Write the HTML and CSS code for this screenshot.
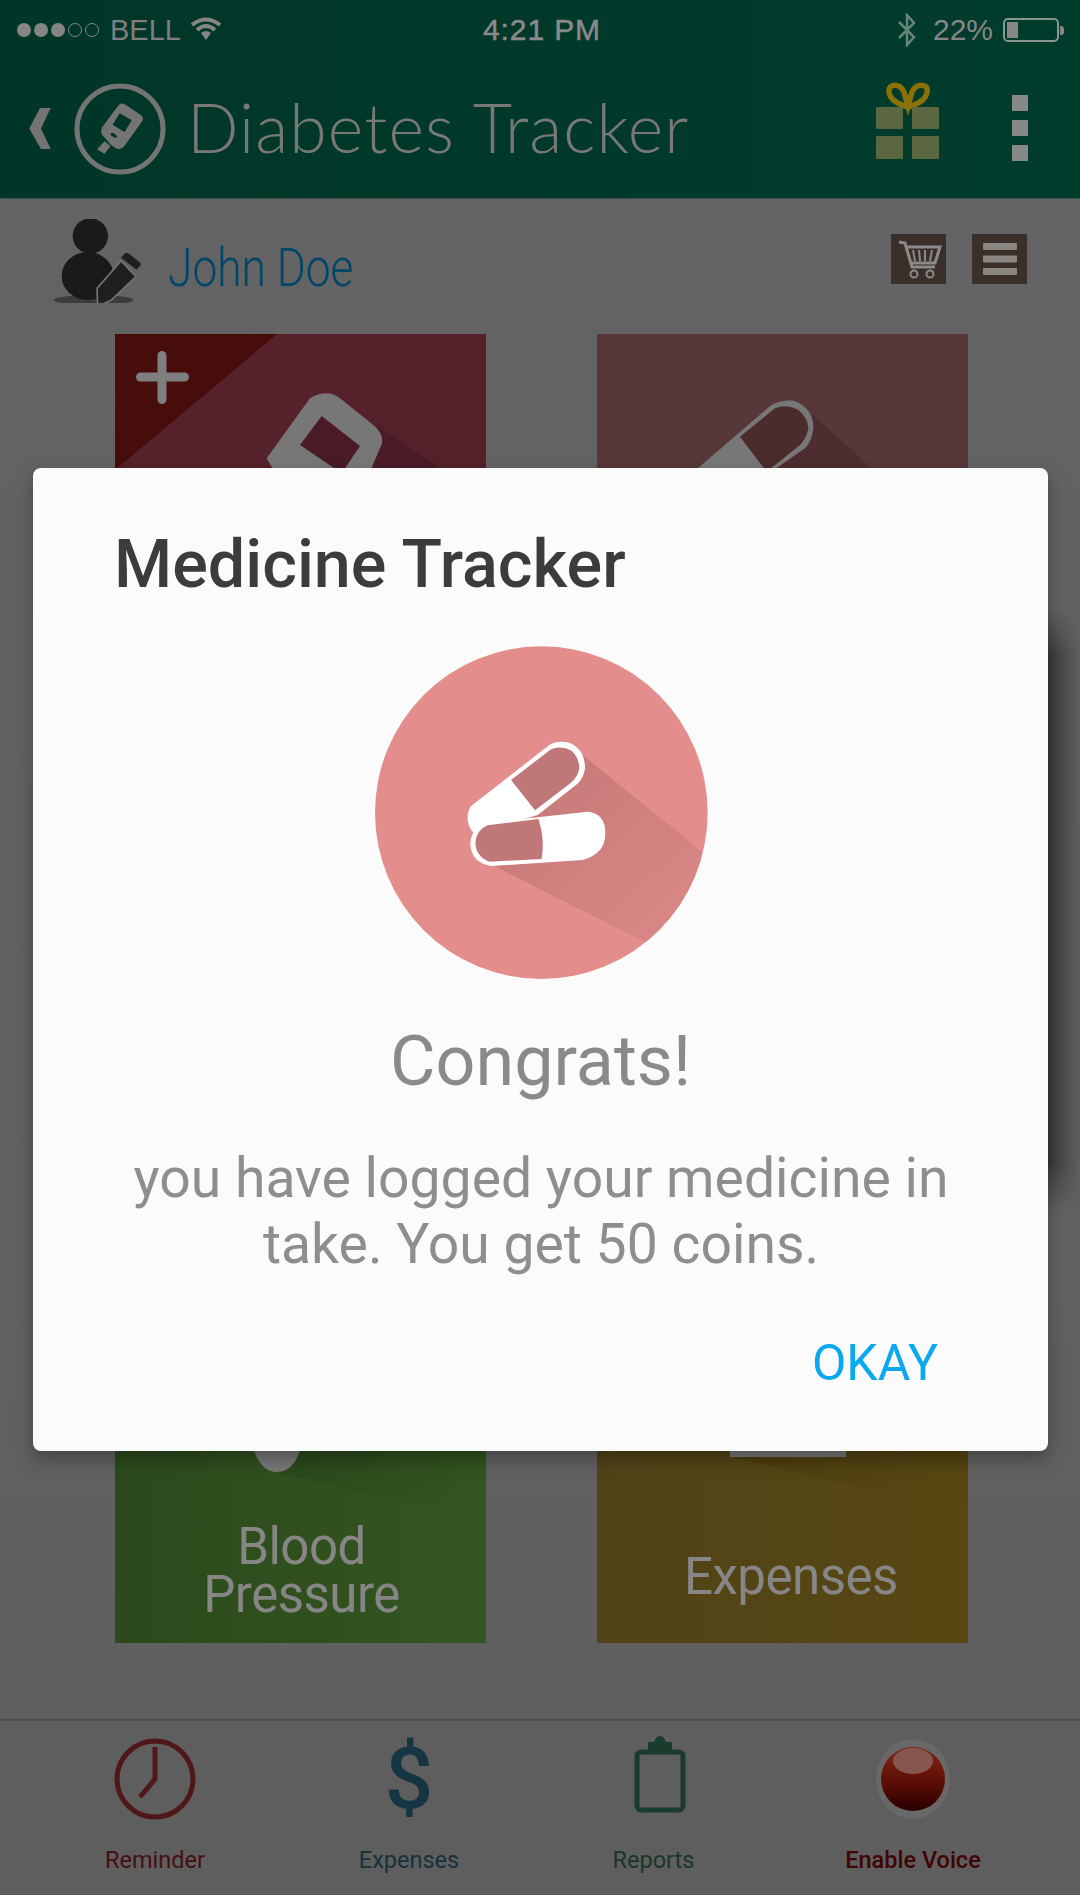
FILE: index.html
```html
<!DOCTYPE html>
<html lang="en">
<head>
<meta charset="utf-8">
<title>Diabetes Tracker</title>
<link rel="stylesheet" href="styles.css">
</head>
<body>
<div class="app">
  <header class="topbar">
    <div class="status">
      <div class="status-left">
        <span class="dots"><i class="dot"></i><i class="dot"></i><i class="dot"></i><i class="dot hollow"></i><i class="dot hollow"></i></span>
        <span class="carrier">BELL</span>
        <svg class="wifi" viewBox="0 0 30 24"><path d="M1 8 Q15 -3 29 8" class="wifi-arc"/><path d="M6 13 Q15 5 24 13" class="wifi-arc"/><path d="M10 16 Q15 12 20 16 L15 23 Z" class="wifi-fill"/></svg>
      </div>
      <span class="clock">4:21 PM</span>
      <div class="status-right">
        <svg class="bt" viewBox="0 0 18 34"><path d="M1 9 L16 24 L9 32 V2 L16 10 L1 25" class="bt-line"/></svg>
        <span class="pct">22%</span>
        <span class="battery"><i class="battery-level"></i></span>
        <i class="battery-nub"></i>
      </div>
    </div>
    <div class="nav">
      <svg class="back" viewBox="0 0 22 44"><path d="M11 1 H22 L12 22 L22 43 H12 L0 22 Z"/></svg>
      <svg class="logo" viewBox="0 0 94 94">
        <circle cx="47" cy="47" r="43" class="logo-ring"/>
        <g transform="translate(-72.500 -80) scale(.33333)">
          <path class="logo-fill" d="M352 312 Q362 300 375 308 L420 338 Q432 346 425 358 L372 432 Q362 446 345 438 L328 426 L322 418 L303 396 Q300 385 305 376 Z"/>
          <path class="logo-hole" d="M358 334 L394 355 L372 390 L336 368 Z"/>
          <ellipse class="logo-hole" cx="340" cy="400" rx="11" ry="5" transform="rotate(32 340 400)"/>
          <path class="logo-fill" d="M312 418 L330 432 L312 456 L290 442 Z"/>
        </g>
      </svg>
      <h1 class="app-title">Diabetes Tracker</h1>
      <svg class="gift" viewBox="0 0 64 76">
        <path class="bow" d="M31 23 C24 20 14 17 13 8 C12 -1 24 -1 28 8 L32 22 L36 8 C40 -1 53 -1 51 8 C50 17 40 20 33 23"/>
        <rect class="gift-box" x="0" y="23" width="27" height="22" rx="1"/>
        <rect class="gift-box" x="36" y="23" width="27" height="22" rx="1"/>
        <rect class="gift-box" x="0" y="52" width="27" height="23" rx="1"/>
        <rect class="gift-box" x="36" y="52" width="27" height="23" rx="1"/>
      </svg>
      <div class="kebab"><i></i><i></i><i></i></div>
    </div>
  </header>

  <main class="content">
    <div class="user-row">
      <svg class="avatar" viewBox="0 0 100 84">
        <g transform="translate(-11 -8) scale(.33333)">
          <ellipse class="av-shadow" cx="158" cy="267" rx="120" ry="15"/>
          <circle class="av-body" cx="148" cy="75" r="53"/>
          <ellipse class="av-body" cx="140" cy="195" rx="78" ry="72"/>
          <path class="av-pen" d="M168 232 L240 150 L285 197 L210 268 L170 286 Z"/>
          <path class="av-cap" d="M252 127 Q258 124 264 128 L296 154 Q302 160 296 166 L286 176 L240 140 Z"/>
        </g>
      </svg>
      <span class="user-name">John Doe</span>
      <div class="tools">
        <span class="tool">
          <svg viewBox="0 0 55 50"><path class="cart" d="M8 8 L14 9 L21 33 H44 M15 13 H49 L44 29 H20"/><path class="cart thin" d="M22 16 L24 27 M28 16 L29 27 M34 16 L34 27 M41 16 L39 27"/><circle class="cart thin" cx="23" cy="40" r="3.500"/><circle class="cart thin" cx="39" cy="40" r="3.500"/></svg>
        </span>
        <span class="tool">
          <svg viewBox="0 0 55 50"><rect class="menu-bar" x="11" y="9" width="34" height="7" rx="1"/><rect class="menu-bar" x="11" y="21.500" width="34" height="7" rx="1"/><rect class="menu-bar" x="11" y="34" width="34" height="7" rx="1"/></svg>
        </span>
      </div>
    </div>

    <div class="cards">
      <div class="card card-log">
        <svg class="art" viewBox="115 334 371 371">
          <polygon class="corner" points="115,334 277,334 115,470"/>
          <rect class="plus" x="136" y="372.500" width="53" height="9" rx="4.500"/>
          <rect class="plus" x="157.500" y="351" width="9" height="53" rx="4.500"/>
          <g transform="translate(110 330) scale(.33333)">
            <path class="log-shadow" d="M800 285 L1010 430 L780 430 Z"/>
            <path class="art-white" d="M600 205 Q650 175 690 205 L790 285 Q830 320 810 355 L760 470 L520 470 L470 385 Z"/>
            <path class="log-hole" d="M635 258 L750 348 L695 430 L570 345 Z"/>
          </g>
        </svg>
      </div>
      <div class="card card-med">
        <svg class="art" viewBox="597 334 371 371">
          <g transform="translate(590 330) scale(.33333)">
            <path class="med-shadow" d="M670 255 L860 430 L520 430 Z"/>
            <path class="art-white" d="M300 435 L540 228 Q570 208 610 212 Q668 232 670 290 Q668 330 645 355 L530 435 Z"/>
            <path class="med-fill" d="M450 320 L555 235 Q590 220 625 240 Q655 265 655 295 Q650 325 630 345 L530 425 Z"/>
          </g>
        </svg>
      </div>
      <div class="card card-bp">
        <svg class="art" viewBox="115 1272 371 371">
          <defs><linearGradient id="bpShade" x1="0" y1="0" x2="1" y2="1"><stop offset="0" stop-color="#25421a" stop-opacity=".8"/><stop offset="1" stop-color="#33551f" stop-opacity="0"/></linearGradient></defs>
          <polygon fill="url(#bpShade)" points="285,1440 486,1440 486,1545 441,1510 275,1472"/>
          <path class="art-white" d="M251 1440 H303 Q296 1472 277 1472 Q258 1472 251 1440 Z"/>
        </svg>
        <span class="card-label">Blood<br>Pressure</span>
      </div>
      <div class="card card-exp">
        <svg class="art" viewBox="597 1272 371 371">
          <defs><linearGradient id="expShade" x1="0" y1="0" x2="1" y2="1"><stop offset="0" stop-color="#443507" stop-opacity=".8"/><stop offset="1" stop-color="#5a4a15" stop-opacity="0"/></linearGradient></defs>
          <polygon fill="url(#expShade)" points="735,1440 968,1440 968,1535 943,1507 730,1457"/>
          <rect class="art-white" x="730" y="1440" width="116" height="17"/>
        </svg>
        <span class="card-label">Expenses</span>
      </div>
    </div>
  </main>

  <nav class="tabs">
    <div class="tab tab-reminder">
      <svg class="tab-icon" viewBox="0 0 82 82"><circle cx="41" cy="41" r="38" class="clock-ring"/><path class="clock-ring" d="M41 9 V41 L26 59"/></svg>
      <span class="tab-label">Reminder</span>
    </div>
    <div class="tab tab-expenses">
      <span class="tab-icon dollar">$</span>
      <span class="tab-label">Expenses</span>
    </div>
    <div class="tab tab-reports">
      <svg class="tab-icon board-icon" viewBox="0 0 56 82"><rect class="board" x="5" y="14" width="46" height="58" rx="4"/><path class="clip" d="M16 4 H22 Q24 -2 28 -2 Q32 -2 34 4 H40 V13 H16 Z"/></svg>
      <span class="tab-label">Reports</span>
    </div>
    <div class="tab tab-voice">
      <svg class="tab-icon" viewBox="0 0 78 82">
        <defs><linearGradient id="rec" x1="0" y1="0" x2="0" y2="1"><stop offset="0" stop-color="#822816"/><stop offset=".55" stop-color="#5e0d05"/><stop offset="1" stop-color="#280000"/></linearGradient></defs>
        <ellipse class="rec-halo" cx="39" cy="41" rx="37" ry="40"/>
        <ellipse cx="39" cy="41" rx="32" ry="32" fill="url(#rec)"/>
        <ellipse class="rec-shine" cx="39" cy="23" rx="20" ry="13"/>
      </svg>
      <span class="tab-label">Enable Voice</span>
    </div>
  </nav>

  <section class="dialog">
    <h2 class="dialog-title">Medicine Tracker</h2>
    <svg class="badge" viewBox="0 0 1080 1080">
      <defs>
        <clipPath id="disc"><circle cx="541" cy="548" r="499"/></clipPath>
        <linearGradient id="longShadow" x1="0" y1="0" x2="1" y2="1"><stop offset="0" stop-color="#c27877"/><stop offset="1" stop-color="#dd8a88"/></linearGradient>
      </defs>
      <circle class="badge-disc" cx="541" cy="548" r="499"/>
      <path clip-path="url(#disc)" fill="url(#longShadow)" d="M665 375 L1060 695 L1060 1000 L850 935 L400 708 Z"/>
      <path class="pill-white" d="M330 528 L565 345 Q590 330 625 338 Q672 358 672 415 Q668 448 645 465 L530 555 L340 610 Q325 600 320 570 Q318 545 330 528 Z"/>
      <path class="pill-dark" d="M450 450 L570 358 Q600 345 632 362 Q655 385 655 415 Q650 442 630 458 L522 541 Z"/>
      <path class="pill-white" d="M385 578 L680 545 Q733 550 733 610 Q733 672 665 690 L392 708 Q330 700 328 640 Q330 590 385 578 Z"/>
      <path class="pill-dark" d="M380 586 L532 567 Q552 625 542 687 L385 695 Q345 680 343 640 Q345 600 380 586 Z"/>
    </svg>
    <p class="congrats">Congrats!</p>
    <p class="message">you have logged your medicine in<br>take. You get 50 coins.</p>
    <div class="actions"><span class="okay">OKAY</span></div>
  </section>
</div>
</body>
</html>
```
FILE: styles.css
```css
* { box-sizing: border-box; }
html, body { margin: 0; padding: 0; }
body { font-family: Roboto, "Liberation Sans", sans-serif; background: #606060; }

.app {
  position: relative;
  width: 1080px;
  height: 1895px;
  overflow: hidden;
  display: flex;
  flex-direction: column;
  background: linear-gradient(#646464, #5f5f5f);
}

/* top bar */
.topbar {
  height: 199px;
  flex: none;
  background: linear-gradient(90deg, #003627, #003c2c);
  border-bottom: 1px solid #38544a;
  color: #858585;
}
.status {
  height: 58px;
  padding: 2px 17px 0 17px;
  display: grid;
  grid-template-columns: 1fr auto 1fr;
  align-items: center;
  font-family: "Liberation Sans", Arial, sans-serif;
}
.status-left, .status-right { display: flex; align-items: center; }
.status-right { justify-content: flex-end; }
.dots { display: flex; gap: 3px; }
.dot { width: 14px; height: 14px; border-radius: 50%; background: #858585; display: block; }
.dot.hollow { background: none; border: 1px solid #858585; }
.carrier { font-size: 29px; margin-left: 11px; color: #7f7f7f; }
.wifi { width: 30px; height: 24px; margin-left: 10px; margin-top: -2px; }
.wifi-arc { fill: none; stroke: #858585; stroke-width: 4; }
.wifi-fill { fill: #858585; }
.clock { font-size: 30px; font-weight: 400; color: #8a8a8a; letter-spacing: .9px; -webkit-text-stroke: .5px #8a8a8a; margin-left: 4px; }
.bt { width: 18px; height: 34px; margin-right: 17px; }
.bt-line { fill: none; stroke: #668479; stroke-width: 2.500; }
.pct { font-size: 30px; color: #878787; margin-right: 10px; }
.battery { width: 56px; height: 24px; border: 2px solid #87978f; border-radius: 5px; padding: 2px; display: block; }
.battery-level { display: block; width: 11px; height: 100%; background: #878787; }
.battery-nub { width: 4px; height: 9px; background: #858585; margin-left: 1px; border-radius: 0 3px 3px 0; display: block; margin-right: -1px; }

.nav { height: 139px; display: flex; align-items: center; padding: 0 52px 0 29px; margin-top: 1px; }
.back { width: 22px; height: 43px; fill: #747474; flex: none; }
.logo { width: 94px; height: 94px; flex: none; margin-left: 22px; }
.logo-ring { fill: none; stroke: #747474; stroke-width: 5; }
.logo-fill { fill: #747474; }
.logo-hole { fill: #003627; }
.app-title {
  margin: 0 0 4px 20px;
  flex: 1;
  font-family: Lato, "Open Sans", sans-serif;
  font-weight: 300;
  font-size: 68px;
  line-height: 80px;
  color: #787878;
  letter-spacing: 1.100px;
  white-space: nowrap;
}
.gift { width: 64px; height: 76px; flex: none; margin: 0 72px 14px 0; overflow: visible; }
.bow { fill: none; stroke: #8a7208; stroke-width: 5.500; }
.gift-box { fill: #5a6740; }
.kebab { display: flex; flex-direction: column; gap: 9px; flex: none; margin-bottom: 2px; }
.kebab i { display: block; width: 16px; height: 16px; background: #888; }

/* main */
.content { flex: 1; display: flex; flex-direction: column; }
.user-row { height: 136px; display: flex; align-items: center; padding: 0 53px 0 52px; }
.avatar { width: 100px; height: 84px; flex: none; margin-top: -12px; }
.av-shadow { fill: #3c3c3c; }
.av-body { fill: #1a1a1a; }
.av-pen { fill: #1f1f1f; stroke: #737373; stroke-width: 5; }
.av-cap { fill: #1f1f1f; }
.user-name {
  margin-left: 16px;
  font-size: 54px;
  font-weight: 300;
  color: #004669;
  display: inline-block;
  transform: scaleX(.82);
  transform-origin: left center;
}
.tools { margin-left: auto; margin-top: -16px; display: flex; gap: 26px; }
.tool { width: 55px; height: 50px; background: #3a2f29; display: block; }
.tool svg { width: 55px; height: 50px; display: block; }
.cart { fill: none; stroke: #8a8a8a; stroke-width: 3; }
.cart.thin { stroke-width: 2; }
.menu-bar { fill: #8a8682; }

.cards {
  display: grid;
  grid-template-columns: 371px 371px;
  grid-template-rows: 371px 371px;
  column-gap: 111px;
  row-gap: 567px;
  padding-left: 115px;
  margin-top: -1px;
}
.card {
  position: relative;
  overflow: hidden;
  display: flex;
  flex-direction: column;
  align-items: center;
  justify-content: flex-end;
}
.art { position: absolute; inset: 0; width: 100%; height: 100%; }
.card-log { background: #55212b; }
.card-med { background: #583739; }
.card-bp { background: linear-gradient(90deg, #2b4a1c, #345620); }
.card-exp { background: linear-gradient(90deg, #514318, #574712); }
.corner { fill: #470d0a; }
.plus { fill: #7f7f7f; }
.art-white { fill: #777; }
.log-hole { fill: #4a1a25; }
.log-shadow { fill: #491c26; }
.med-shadow { fill: #4d2d30; }
.med-fill { fill: #4c2c2b; }
.card-label {
  position: relative;
  font-size: 51px;
  line-height: 48px;
  color: #868686;
  text-align: center;
  letter-spacing: -.5px;
  padding: 0 0 24px 2px;
}
.card-exp .card-label { padding-bottom: 42px; padding-left: 17px; }

/* bottom tabs */
.tabs {
  height: 176px;
  flex: none;
  display: grid;
  grid-template-columns: 310px 198px 291px 228px;
  border-top: 2px solid #4e4e4e;
  background: #5e5e5e;
  padding-top: 17px;
}
.tab { display: flex; flex-direction: column; align-items: center; }
.tab-icon { height: 82px; display: block; flex: none; overflow: visible; }
.board-icon { margin-left: 12px; }
.tab-label { margin-top: 25px; font-size: 23.500px; line-height: 30px; }
.tab-reminder .tab-label { color: #450e11; }
.tab-expenses .tab-label { color: #16313b; }
.tab-reports .tab-label { color: #18372a; }
.tab-voice .tab-label { color: #410404; font-weight: 500; }
.clock-ring { fill: none; stroke: #501719; stroke-width: 5; }
.dollar { font-weight: 500; font-size: 86px; line-height: 82px; color: #163542; }
.board { fill: none; stroke: #1b3b2d; stroke-width: 5; }
.clip { fill: #1b3b2d; }
.rec-halo { fill: #686868; }
.rec-shine { fill: #85574e; }

/* dialog */
.dialog {
  position: absolute;
  left: 33px;
  top: 468px;
  width: 1015px;
  height: 983px;
  background: #fbfbfb;
  border-radius: 8px;
  box-shadow: 0 8px 18px rgba(0, 0, 0, .3);
  padding: 56px 71px 0 83px;
  display: flex;
  flex-direction: column;
  align-items: center;
}
.dialog::after {
  content: "";
  position: absolute;
  left: 100%;
  top: 140px;
  bottom: 240px;
  width: 34px;
  background: linear-gradient(90deg, rgba(0, 0, 0, .42), rgba(0, 0, 0, 0));
  -webkit-mask-image: linear-gradient(transparent, #000 8%, #000 92%, transparent);
  mask-image: linear-gradient(transparent, #000 8%, #000 92%, transparent);
}
.dialog-title {
  align-self: flex-start;
  margin: 0 0 0 -2px;
  font-size: 66.500px;
  line-height: 80px;
  font-weight: 500;
  color: #3c3c3c;
}
.badge { width: 360px; height: 360px; flex: none; margin: 26px 0 0 -12px; }
.badge-disc { fill: #e38e8c; }
.pill-white { fill: #fff; }
.pill-dark { fill: #bf7777; }
.congrats { margin: 26px 0 0 -12px; font-size: 70px; line-height: 90px; color: #8a8a8a; }
.message { margin: 40px 0 0 -11px; font-size: 55.300px; line-height: 66px; color: #8e8e8e; text-align: center; white-space: nowrap; }
.actions { align-self: flex-end; margin: 55px 39px 0 0; }
.okay { font-size: 50px; line-height: 60px; font-weight: 400; color: #0aa8f0; display: block; }
```
